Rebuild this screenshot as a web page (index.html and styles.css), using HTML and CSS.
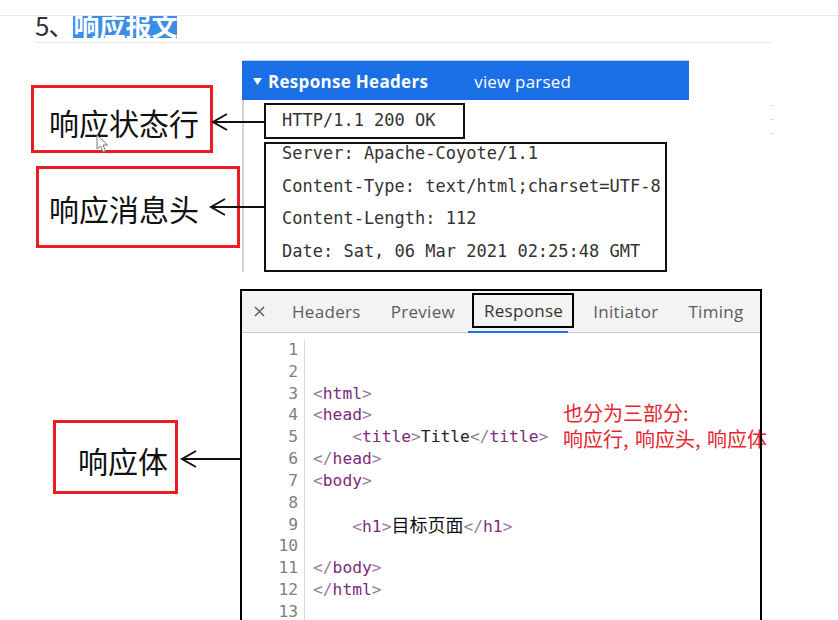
FILE: index.html
```html
<!DOCTYPE html>
<html lang="zh">
<head>
<meta charset="utf-8">
<title>响应报文</title>
<link rel="stylesheet" href="styles.css">
</head>
<body>
<div class="page">
  <div class="topline"></div>
  <div class="heading-clip">
    <h2 class="heading"><span class="num">5、</span><span class="sel">响应报文</span></h2>
  </div>

  <section class="row row-headers">
    <div class="labels">
      <div class="label label-status">响应状态行</div>
      <div class="label label-head">响应消息头</div>
    </div>
    <div class="hdr-panel">
      <div class="hdr-bar">
        <svg class="tri" width="9" height="7" viewBox="0 0 9 7"><polygon points="0,0 9,0 4.5,7" fill="#fff"/></svg>
        <span class="hdr-title">Response Headers</span>
        <span class="hdr-link">view parsed</span>
      </div>
      <div class="hdr-body">
        <div class="box status-box">HTTP/1.1 200 OK</div>
        <div class="box fields-box">
          <div>Server: Apache-Coyote/1.1</div>
          <div>Content-Type: text/html;charset=UTF-8</div>
          <div>Content-Length: 112</div>
          <div>Date: Sat, 06 Mar 2021 02:25:48 GMT</div>
        </div>
      </div>
    </div>
    <div class="ticks"><i></i><i></i><i></i></div>
  </section>

  <section class="row row-body">
    <div class="labels">
      <div class="label label-body">响应体</div>
    </div>
    <div class="resp-panel">
      <div class="tabs">
        <span class="close"><svg width="11" height="11" viewBox="0 0 11 11"><path d="M1 1 L10 10 M10 1 L1 10" stroke="#666" stroke-width="1.6"/></svg></span>
        <span class="tab">Headers</span>
        <span class="tab">Preview</span>
        <span class="tab tab-active"><span class="tab-box">Response</span></span>
        <span class="tab">Initiator</span>
        <span class="tab">Timing</span>
      </div>
      <div class="code">
        <div class="gutter">
          <div>1</div><div>2</div><div>3</div><div>4</div><div>5</div><div>6</div><div>7</div><div>8</div><div>9</div><div>10</div><div>11</div><div>12</div><div>13</div>
        </div>
        <div class="lines">
          <div class="ln">&nbsp;</div>
          <div class="ln">&nbsp;</div>
          <div class="ln"><span class="b">&lt;</span><span class="t">html</span><span class="b">&gt;</span></div>
          <div class="ln"><span class="b">&lt;</span><span class="t">head</span><span class="b">&gt;</span></div>
          <div class="ln">    <span class="b">&lt;</span><span class="t">title</span><span class="b">&gt;</span>Title<span class="b">&lt;/</span><span class="t">title</span><span class="b">&gt;</span></div>
          <div class="ln"><span class="b">&lt;/</span><span class="t">head</span><span class="b">&gt;</span></div>
          <div class="ln"><span class="b">&lt;</span><span class="t">body</span><span class="b">&gt;</span></div>
          <div class="ln">&nbsp;</div>
          <div class="ln">    <span class="b">&lt;</span><span class="t">h1</span><span class="b">&gt;</span><span class="cjk">目标页面</span><span class="b">&lt;/</span><span class="t">h1</span><span class="b">&gt;</span></div>
          <div class="ln">&nbsp;</div>
          <div class="ln"><span class="b">&lt;/</span><span class="t">body</span><span class="b">&gt;</span></div>
          <div class="ln"><span class="b">&lt;/</span><span class="t">html</span><span class="b">&gt;</span></div>
          <div class="ln">&nbsp;</div>
        </div>
      </div>
      <div class="note">也分为三部分:<br>响应行, 响应头, 响应体</div>
    </div>
  </section>

  <svg class="arrows" width="838" height="620" viewBox="0 0 838 620">
    <g fill="none" stroke="#111" stroke-width="2">
      <path d="M213 122 H264 M227 114 L213 122 L227 130"/>
      <path d="M211 207 H264 M225 199 L211 207 L225 215"/>
      <path d="M182 459 H240 M196 451 L182 459 L196 467"/>
    </g>
  </svg>
  <svg class="cursor" width="14" height="20" viewBox="0 0 14 20">
    <path d="M1 1 L1 15 L4.5 12 L7 18 L9.5 17 L7 11 L11.5 11 Z" fill="#fff" stroke="#777" stroke-width="1"/>
  </svg>
</div>
</body>
</html>
```

FILE: styles.css
```css
* { box-sizing: border-box; }

html, body {
  margin: 0;
  padding: 0;
  background: #fff;
}

.page {
  position: relative;
  width: 838px;
  height: 620px;
  overflow: hidden;
  background: #fff;
  font-family: "Noto Sans CJK SC", sans-serif;
  color: #111;
}

.topline {
  height: 16px;
  border-bottom: 1px solid #ebebeb;
}

.heading-clip {
  margin-left: 35px;
  width: 737px;
  height: 27px;
  border-bottom: 1px solid #ebebeb;
  overflow: hidden;
}

.heading {
  margin: -5px 0 0 0;
  font-family: "Noto Sans CJK SC", sans-serif;
  font-size: 26px;
  line-height: 27px;
  font-weight: 700;
  white-space: nowrap;
}

.heading .num {
  color: #333;
  font-weight: 400;
  letter-spacing: -1px;
}

.heading .sel {
  display: inline-block;
  background: #3b8ee8;
  color: #fff;
}

.row {
  display: flex;
  align-items: flex-start;
}

.row-headers {
  height: 246px;
}

.labels {
  display: flex;
  flex-direction: column;
  align-items: flex-start;
}

.row-headers .labels { width: 242px; }
.row-body .labels { width: 240px; }

.label {
  display: flex;
  align-items: center;
  border: 3px solid #ea1c24;
  font-family: "Noto Sans CJK SC", sans-serif;
  font-size: 30px;
  font-weight: 400;
  color: #111;
  white-space: nowrap;
}

.label-status {
  margin: 42px 0 0 31px;
  width: 182px;
  height: 68px;
  padding: 5px 0 0 15px;
}

.label-head {
  margin: 13px 0 0 36px;
  width: 204px;
  height: 82px;
  padding: 1px 0 0 10px;
}

.label-body {
  margin: 131px 0 0 53px;
  width: 125px;
  height: 74px;
  padding: 5px 0 0 22px;
}

/* Response headers panel */
.hdr-panel {
  margin-top: 17px;
  width: 447px;
}

.hdr-bar {
  display: flex;
  align-items: center;
  height: 40px;
  padding: 2px 0 0 11px;
  background: #1b6fe6;
  border-top: 1px solid #b7cff3;
  font-family: "Open Sans", sans-serif;
  font-size: 17px;
  color: #fff;
}

.tri { margin-right: 6px; }

.hdr-title {
  font-weight: 700;
  letter-spacing: 0.3px;
}

.hdr-link {
  margin-left: 46px;
  font-weight: 400;
  letter-spacing: 0.2px;
}

.hdr-body {
  height: 172px;
  padding: 3px 0 0 20px;
  border-left: 2px solid #d2d2d2;
  font-family: "DejaVu Sans Mono", monospace;
  font-size: 17px;
  color: #333;
}

.box {
  border: 2px solid #111;
  white-space: pre;
}

.status-box {
  width: 201px;
  height: 36px;
  padding-left: 16px;
  line-height: 31px;
}

.fields-box {
  margin-top: 3px;
  width: 403px;
  height: 130px;
  padding: 0 0 0 16px;
  display: flex;
  flex-direction: column;
  gap: 14.6px;
  line-height: 18px;
}

.ticks {
  margin: 62px 0 0 81px;
  display: flex;
  flex-direction: column;
  gap: 13px;
}

.ticks i {
  display: block;
  width: 4px;
  height: 1px;
  background: #dcdcdc;
}

/* Response panel */
.resp-panel {
  position: relative;
  width: 522px;
  height: 340px;
  padding: 2px 2px 0 2px;
}

.resp-panel::after {
  content: "";
  position: absolute;
  inset: 0;
  border: 2px solid #000;
  border-bottom: none;
  pointer-events: none;
  z-index: 2;
}

.tabs {
  display: flex;
  align-items: stretch;
  height: 42px;
  background: #f3f3f3;
  border-bottom: 1px solid #cbcbcb;
  font-family: "Open Sans", sans-serif;
  font-size: 17px;
  letter-spacing: 0.3px;
  color: #5c5c5c;
}

.close {
  display: flex;
  align-items: center;
  width: 13px;
  margin: 0 11px 0 11px;
  padding-left: 1px;
}

.tab {
  position: relative;
  display: flex;
  align-items: center;
  padding: 0 15px;
  white-space: nowrap;
}

.tab-active {
  padding: 0 4px 0 2px;
  color: #333;
}

.tab-active::after {
  content: "";
  position: absolute;
  left: -2px;
  bottom: -1px;
  width: 100px;
  height: 2px;
  background: #1a73e8;
}

.tab-box {
  display: flex;
  align-items: center;
  height: 35px;
  margin-top: -2px;
  padding: 0 9px 0 10px;
  border: 2px solid #000;
}

.code {
  display: flex;
  padding-top: 6px;
  font-family: "DejaVu Sans Mono", monospace;
  font-size: 16.3px;
  line-height: 21.83px;
}

.gutter {
  width: 63px;
  padding-right: 6px;
  border-right: 1px solid #dcdcdc;
  text-align: right;
  color: #808080;
}

.lines {
  padding-left: 8px;
  color: #222;
}

.lines .ln {
  white-space: pre;
  height: 21.83px;
}

.lines .t { color: #7e2a7b; }
.lines .b { color: #9c7b9a; }

.lines .cjk {
  font-family: "Noto Sans CJK SC", sans-serif;
  font-size: 18px;
  line-height: 20px;
  color: #111;
}

.note {
  position: absolute;
  left: 323px;
  top: 111px;
  z-index: 1;
  font-family: "Noto Sans CJK SC", sans-serif;
  font-size: 20px;
  line-height: 26px;
  word-spacing: 2px;
  color: #e6262f;
  white-space: nowrap;
}

.arrows {
  position: absolute;
  left: 0;
  top: 0;
  pointer-events: none;
  z-index: 3;
}

.cursor {
  position: absolute;
  left: 96px;
  top: 134px;
  z-index: 4;
}
```
